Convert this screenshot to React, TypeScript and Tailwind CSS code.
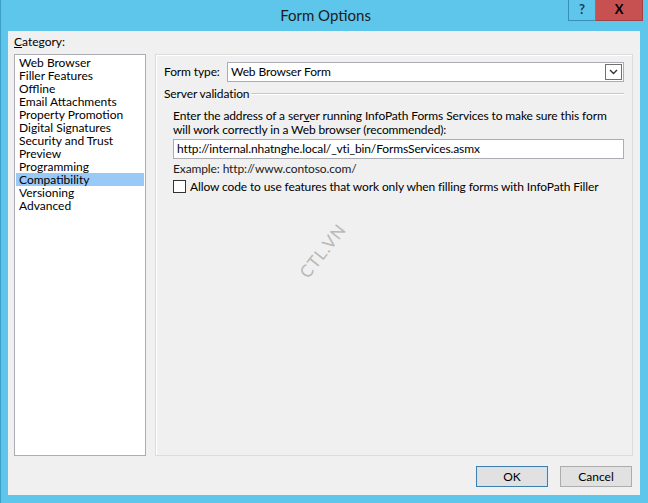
const categories = [
  "Web Browser",
  "Filler Features",
  "Offline",
  "Email Attachments",
  "Property Promotion",
  "Digital Signatures",
  "Security and Trust",
  "Preview",
  "Programming",
  "Compatibility",
  "Versioning",
  "Advanced",
]

export default function App() {
  return (
    <div
      className="w-[648px] h-[503px] bg-[#5fc6eb] border-l border-[#3c9ec6] flex flex-col text-[12px] text-black whitespace-nowrap"
      style={{ fontFamily: 'Lato, "Segoe UI", sans-serif' }}
    >
      {/* title bar */}
      <div className="relative h-[31px] flex items-center justify-center">
        <span className="text-[15px] text-[#1b1b1b] pl-[2px]">Form Options</span>
        <div className="absolute top-0 right-[5px] flex">
          <div className="w-[28px] h-[21px] border border-[#3a8fb4] border-t-0 flex items-center justify-center text-[13px] font-bold text-[#1d3b55]">
            ?
          </div>
          <div className="w-[47px] h-[21px] bg-[#c75050] border border-[#a64040] border-t-0 border-l-0 flex items-center justify-center text-[13px] font-bold text-black">
            X
          </div>
        </div>
      </div>

      {/* client area */}
      <div className="ml-[7px] mr-[8px] mb-[8px] flex-1 bg-[#f0f0f0] flex flex-col relative">
        <div className="pl-[6px] pt-[3px] h-[23px] leading-[15px]">
          <span className="underline">C</span>ategory:
        </div>

        <div className="flex pl-[6px] pr-[7px] h-[402px] gap-[9px]">
          {/* category list */}
          <div className="w-[132px] h-full bg-white border border-[#abadb3] py-[1px] px-[1px]">
            {categories.map((c) => (
              <div
                key={c}
                className={`h-[13px] leading-[13px] pl-[3px] ${c === "Compatibility" ? "bg-[#99c9f7]" : ""}`}
              >
                {c}
              </div>
            ))}
          </div>

          {/* options panel */}
          <div className="flex-1 h-full border border-[#dcdcdc] shadow-[inset_1px_1px_0_#ffffff] pl-[8px] pr-[8px] pt-[7px] tracking-[-0.12px]">
            <div className="flex items-center h-[20px]">
              <span className="w-[63px]">Form type:</span>
              <div className="flex-1 h-[20px] bg-white border border-[#abadb3] flex items-center justify-between pl-[3px] pr-[1px]">
                <span>Web Browser Form</span>
                <div className="w-[17px] h-[16px] border border-[#707070] flex items-center justify-center">
                  <svg width="9" height="6" viewBox="0 0 9 6">
                    <path d="M1 1 L4.5 4.5 L8 1" stroke="#333" strokeWidth="1.4" fill="none" />
                  </svg>
                </div>
              </div>
            </div>

            <div className="flex items-center mt-[3px] h-[17px]">
              <span className="pr-[2px]">Server validation</span>
              <div className="flex-1 h-px bg-[#c8c8c8] border-b border-white box-content" />
            </div>

            <div className="pl-[9px] pt-[7px]">
              <div className="leading-[14px]">
                Enter the address of a ser<span className="underline">v</span>er running InfoPath Forms Services to make sure this form
                <br />
                will work correctly in a Web browser (recommended):
              </div>
              <div className="mt-[2px] h-[20px] bg-white border border-[#abadb3] flex items-center pl-[3px]">
                http://internal.nhatnghe.local/_vti_bin/FormsServices.asmx
              </div>
              <div className="h-[20px] leading-[20px] text-[#1b1b1b]">Example: http://www.contoso.com/</div>
              <div className="flex items-center h-[15px]">
                <div className="w-[13px] h-[13px] bg-white border border-[#333]" />
                <span className="pl-[4px]">Allow code to use features that work only when filling forms with InfoPath Filler</span>
              </div>
            </div>
          </div>
        </div>

        {/* buttons */}
        <div className="flex justify-end gap-[12px] pr-[8px] pt-[10px]">
          <button className="w-[72px] h-[21px] bg-[#e1e1e1] border border-[#3c7fb1] shadow-[inset_0_0_0_1px_#cfe4f3]">OK</button>
          <button className="w-[72px] h-[21px] bg-[#e1e1e1] border border-[#adadad]">Cancel</button>
        </div>

        {/* watermark */}
        <div className="absolute left-[283px] top-[207px] -rotate-[52deg] text-[17px] text-[#b8b8b8] tracking-[1px]">
          CTL.VN
        </div>
      </div>
    </div>
  )
}
